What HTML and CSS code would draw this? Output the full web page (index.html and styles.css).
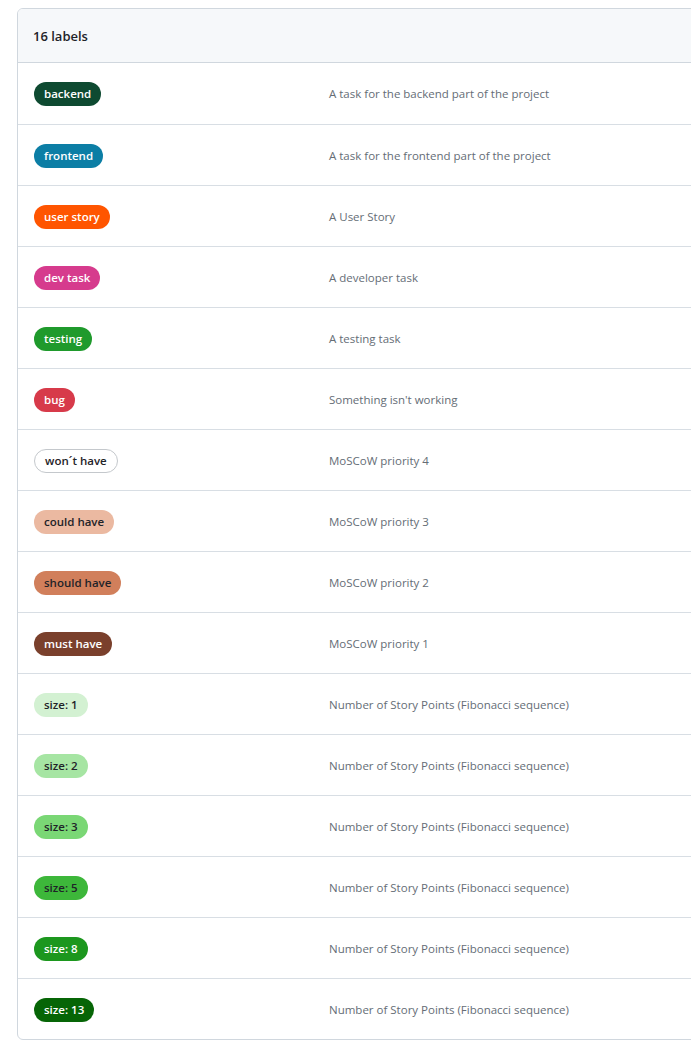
FILE: index.html
```html
<!DOCTYPE html>
<html>
<head>
<meta charset="utf-8">
<link rel="stylesheet" href="styles.css">
</head>
<body>
<div class="box">
  <div class="box-header">16 labels</div>
  <div class="row"><div class="col-name"><span class="label" style="background:#0e4a31;color:#fff">backend</span></div><div class="col-desc">A task for the backend part of the project</div></div>
  <div class="row"><div class="col-name"><span class="label" style="background:#0c7ea5;color:#fff">frontend</span></div><div class="col-desc">A task for the frontend part of the project</div></div>
  <div class="row"><div class="col-name"><span class="label" style="background:#ff5500;color:#fff">user story</span></div><div class="col-desc">A User Story</div></div>
  <div class="row"><div class="col-name"><span class="label" style="background:#d63b8d;color:#fff">dev task</span></div><div class="col-desc">A developer task</div></div>
  <div class="row"><div class="col-name"><span class="label" style="background:#1f9a2c;color:#fff">testing</span></div><div class="col-desc">A testing task</div></div>
  <div class="row"><div class="col-name"><span class="label" style="background:#d73a4a;color:#fff">bug</span></div><div class="col-desc">Something isn't working</div></div>
  <div class="row"><div class="col-name"><span class="label label-outline">won´t have</span></div><div class="col-desc">MoSCoW priority 4</div></div>
  <div class="row"><div class="col-name"><span class="label" style="background:#ebb9a1;color:#1f2328">could have</span></div><div class="col-desc">MoSCoW priority 3</div></div>
  <div class="row"><div class="col-name"><span class="label" style="background:#d17f5b;color:#1f2328">should have</span></div><div class="col-desc">MoSCoW priority 2</div></div>
  <div class="row"><div class="col-name"><span class="label" style="background:#7a402c;color:#fff">must have</span></div><div class="col-desc">MoSCoW priority 1</div></div>
  <div class="row"><div class="col-name"><span class="label" style="background:#d3f1d2;color:#1f2328">size: 1</span></div><div class="col-desc">Number of Story Points (Fibonacci sequence)</div></div>
  <div class="row"><div class="col-name"><span class="label" style="background:#a6e5a3;color:#1f2328">size: 2</span></div><div class="col-desc">Number of Story Points (Fibonacci sequence)</div></div>
  <div class="row"><div class="col-name"><span class="label" style="background:#7ad775;color:#1f2328">size: 3</span></div><div class="col-desc">Number of Story Points (Fibonacci sequence)</div></div>
  <div class="row"><div class="col-name"><span class="label" style="background:#3db73a;color:#1f2328">size: 5</span></div><div class="col-desc">Number of Story Points (Fibonacci sequence)</div></div>
  <div class="row"><div class="col-name"><span class="label" style="background:#1c971e;color:#fff">size: 8</span></div><div class="col-desc">Number of Story Points (Fibonacci sequence)</div></div>
  <div class="row"><div class="col-name"><span class="label" style="background:#066506;color:#fff">size: 13</span></div><div class="col-desc">Number of Story Points (Fibonacci sequence)</div></div>
</div>
</body>
</html>
```

FILE: styles.css
```css
html, body {
  margin: 0;
  padding: 0;
  overflow: hidden;
  background: #ffffff;
}
body {
  padding: 8px 0 0 17px;
  font-family: "Open Sans", "Noto Sans", sans-serif;
  color: #1f2328;
}
.box {
  width: 1000px;
  border: 1px solid #d0d7de;
  border-radius: 6px;
  overflow: hidden;
}
.box-header {
  background: #f6f8fa;
  height: 54px;
  box-sizing: border-box;
  padding: 0 15px;
  display: flex;
  align-items: center;
  font-size: 13px;
  font-weight: 600;
  border-bottom: 1px solid #d0d7de;
}
.row {
  display: flex;
  align-items: center;
  height: 61px;
  box-sizing: border-box;
  border-top: 1px solid #d8dee4;
}
.box-header + .row {
  border-top: none;
  height: 61px;
}
.col-name {
  width: 311px;
  padding-left: 16px;
  box-sizing: border-box;
  flex: none;
}
.col-desc {
  font-size: 11.5px;
  color: #656d76;
}
.label {
  display: inline-block;
  height: 24px;
  line-height: 24px;
  padding: 0 10px;
  border-radius: 12px;
  font-size: 11.5px;
  font-weight: 600;
  box-sizing: border-box;
}
.label-outline {
  background: #ffffff;
  color: #1f2328;
  border: 1px solid #c4c8cc;
  line-height: 22px;
}
```
